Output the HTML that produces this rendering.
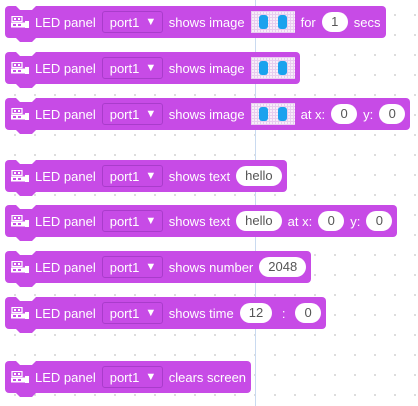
<!DOCTYPE html>
<html><head><style>
body{margin:0;width:418px;height:406px;overflow:hidden;background:#fff;
background-image:radial-gradient(circle,#d6d6d6 0.8px,transparent 1.2px);background-size:20px 20px;background-position:5px 5px;
font-family:"Liberation Sans",sans-serif;font-size:13px;position:relative}
.vl{position:absolute;left:255px;top:0;width:1px;height:406px;background:#c9daf0}
.b{position:absolute;left:5px;height:32px;background:#c74be6;border-radius:4px;display:flex;align-items:center;color:#fff;padding-right:5px;box-sizing:border-box;white-space:nowrap}
.b>*{flex-shrink:0}
.b:before{content:"";position:absolute;left:11px;top:0;width:20px;height:4px;background:#fff;clip-path:polygon(0 0,100% 0,80% 100%,20% 100%)}
.b:after{content:"";position:absolute;left:11px;bottom:-4px;width:20px;height:4px;background:#c74be6;clip-path:polygon(0 0,100% 0,80% 100%,20% 100%)}
.ic{width:18px;height:12px;margin-left:6px;margin-right:6px}
.dd{border:1px solid #a93ccb;border-radius:3px;height:22px;box-sizing:border-box;width:61px;margin-left:6px;margin-right:6px;display:flex;align-items:center;padding-left:7px}
.dd i{font-style:normal;font-size:11px;margin-left:6px}
.p{background:#fff;color:#555;border-radius:10px;height:20px;line-height:20px;padding:0 9px;margin:0 6px;min-width:8px;text-align:center}
.img{width:44px;height:22px;margin:0 6px;background:#f7eef9;background-image:linear-gradient(#e8cdef 1px,transparent 1px),linear-gradient(90deg,#e8cdef 1px,transparent 1px);background-size:3px 3px;position:relative}
.img:before,.img:after{content:"";position:absolute;top:4px;width:9px;height:14px;background:#1aa2ee;border-radius:3px}
.img:before{left:8px}.img:after{left:27px}
</style></head><body>
<div class="vl"></div>
<svg width="0" height="0" style="position:absolute"><defs><g id="ico"><rect x="1" y="0.5" width="10" height="5" fill="none" stroke="#fff" stroke-width="1.2"/><rect x="3" y="2" width="2" height="2" fill="#fff"/><rect x="7" y="2" width="2" height="2" fill="#fff"/><rect x="0" y="6.5" width="16" height="5" fill="#fff"/><rect x="14" y="5" width="4" height="7" fill="#fff"/><rect x="2" y="8" width="3" height="2" fill="#c74be6"/><rect x="7" y="8" width="3" height="2" fill="#c74be6"/></g></defs></svg>

<div class="b" style="top:6px"><svg class="ic" viewBox="0 0 18 12"><use href="#ico"/></svg>LED panel<span class="dd">port1<i>▼</i></span>shows image<span class="img"></span>for<span class="p">1</span>secs</div>
<div class="b" style="top:52px"><svg class="ic" viewBox="0 0 18 12"><use href="#ico"/></svg>LED panel<span class="dd">port1<i>▼</i></span>shows image<span class="img" style="margin-right:0"></span></div>
<div class="b" style="top:98px"><svg class="ic" viewBox="0 0 18 12"><use href="#ico"/></svg>LED panel<span class="dd">port1<i>▼</i></span>shows image<span class="img"></span>at x:<span class="p">0</span>y:<span class="p" style="margin-right:0">0</span></div>
<div class="b" style="top:160px"><svg class="ic" viewBox="0 0 18 12"><use href="#ico"/></svg>LED panel<span class="dd">port1<i>▼</i></span>shows text<span class="p" style="margin-right:0">hello</span></div>
<div class="b" style="top:205px"><svg class="ic" viewBox="0 0 18 12"><use href="#ico"/></svg>LED panel<span class="dd">port1<i>▼</i></span>shows text<span class="p">hello</span>at x:<span class="p">0</span>y:<span class="p" style="margin-right:0">0</span></div>
<div class="b" style="top:251px"><svg class="ic" viewBox="0 0 18 12"><use href="#ico"/></svg>LED panel<span class="dd">port1<i>▼</i></span>shows number<span class="p" style="margin-right:0">2048</span></div>
<div class="b" style="top:297px"><svg class="ic" viewBox="0 0 18 12"><use href="#ico"/></svg>LED panel<span class="dd">port1<i>▼</i></span>shows time<span class="p">12</span>&nbsp;:&nbsp;<span class="p" style="margin-right:0">0</span></div>
<div class="b" style="top:361px"><svg class="ic" viewBox="0 0 18 12"><use href="#ico"/></svg>LED panel<span class="dd">port1<i>▼</i></span>clears screen</div>
</body></html>
